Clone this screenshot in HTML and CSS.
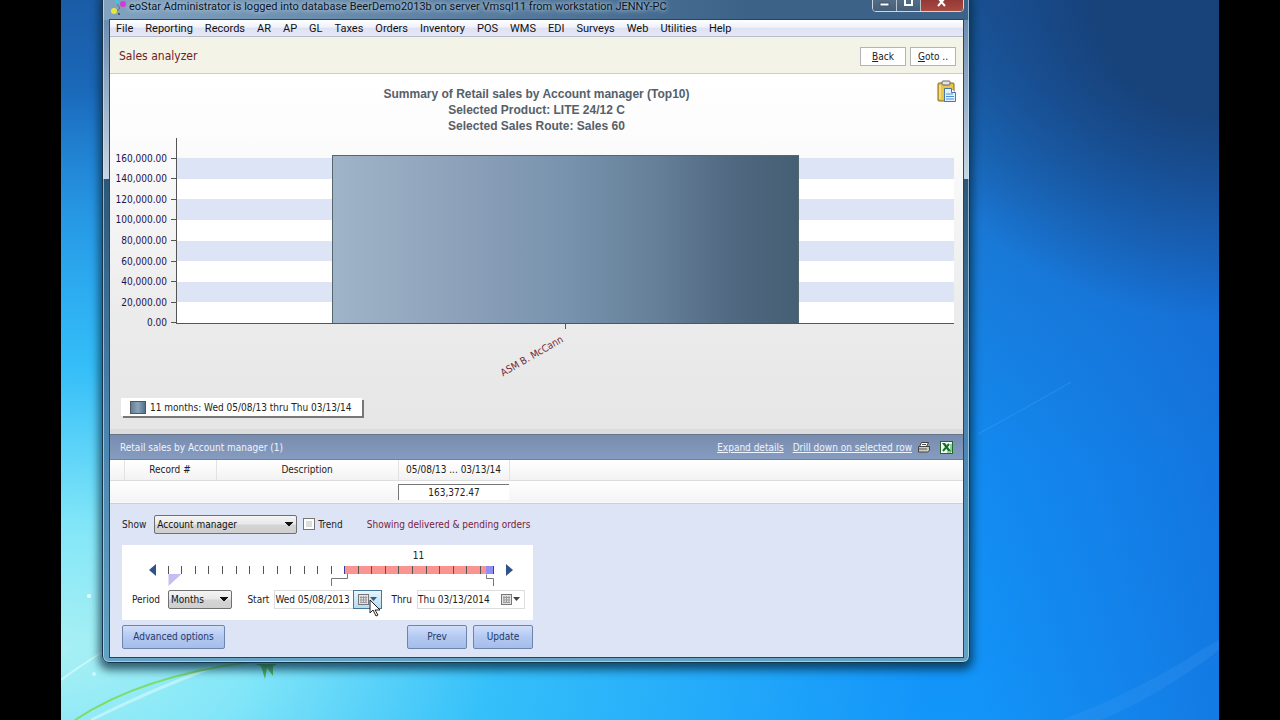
FILE: index.html
```html
<!DOCTYPE html>
<html lang="en">
<head>
  <meta charset="utf-8">
  <title>Sales analyzer</title>
  <link rel="stylesheet" href="styles.css">
</head>
<body>
  <div class="desktop">
    <svg class="wallpaper" viewBox="0 0 1158 720" preserveAspectRatio="none" aria-hidden="true">
      <path d="M0 680 Q20 665 48 648" stroke="#e4fdfd" stroke-opacity=".6" stroke-width="2" fill="none"/>
      <path d="M30 720 Q90 690 150 668" stroke="#e4fdfd" stroke-opacity=".5" stroke-width="3" fill="none"/>
      <path d="M14 720 Q80 676 190 662" stroke="#7ddc6c" stroke-width="2" fill="none"/>
      <path d="M194 664 l6 2 l4 13 l2 -11 l6 8 l0 -10 l4 -2 z" fill="#4fae62"/>
      <path d="M917 434 Q970 405 1010 382" stroke="#5cb0f8" stroke-opacity=".3" stroke-width="1" fill="none"/>
      <path d="M1000 720 Q1080 690 1140 650 L1158 640 V650 Q1100 695 1040 720z" fill="#4da0f4" fill-opacity=".2"/>
      <circle cx="28" cy="596" r="2" fill="#e8ffff"/>
      <circle cx="33" cy="674" r="2" fill="#c8f8ff"/>
    </svg>

    <div class="window">
      <div class="titlebar">
        <svg class="app-icon" width="20" height="20" viewBox="0 0 20 20" aria-hidden="true">
          <circle cx="8" cy="6" r="2" fill="#38c8e8"/>
          <circle cx="14" cy="8" r="3" fill="#d838d8"/>
          <circle cx="5" cy="15" r="3" fill="#e8e83c"/>
          <circle cx="10" cy="18" r="1" fill="#446"/>
          <path d="M8 8l3 4l-3 3" stroke="#5d7b5c" fill="none"/>
        </svg>
        <span class="title">eoStar Administrator is logged into database BeerDemo2013b on server Vmsql11 from workstation JENNY-PC</span>
        <div class="window-buttons">
          <button class="win-btn" aria-label="Minimize"><svg width="11" height="10"><rect x="1" y="5" width="9" height="3" fill="#fff" stroke="#456"/></svg></button>
          <button class="win-btn" aria-label="Maximize"><svg width="11" height="10"><rect x="2" y="1" width="7" height="6" fill="none" stroke="#fff" stroke-width="2"/></svg></button>
          <button class="win-btn close" aria-label="Close"><svg width="12" height="10"><path d="M2 0l7 8M9 0l-7 8" stroke="#fff" stroke-width="2"/></svg></button>
        </div>
      </div>

      <div class="client">
        <nav class="menubar">
          <a href="#">File</a>
          <a href="#">Reporting</a>
          <a href="#">Records</a>
          <a href="#">AR</a>
          <a href="#">AP</a>
          <a href="#">GL</a>
          <a href="#">Taxes</a>
          <a href="#">Orders</a>
          <a href="#">Inventory</a>
          <a href="#">POS</a>
          <a href="#">WMS</a>
          <a href="#">EDI</a>
          <a href="#">Surveys</a>
          <a href="#">Web</a>
          <a href="#">Utilities</a>
          <a href="#">Help</a>
        </nav>

        <header class="page-header">
          <h1>Sales analyzer</h1>
          <button class="nav-btn"><u>B</u>ack</button>
          <button class="nav-btn"><u>G</u>oto ..</button>
        </header>

        <section class="chart">
          <button class="clipboard" aria-label="Copy to clipboard">
            <svg width="20" height="23" viewBox="0 0 20 23">
              <rect x="1" y="3" width="16" height="18" rx="1" fill="#e8c64a" stroke="#80661c"/>
              <path d="M3 5v14" stroke="#fff2a8"/>
              <rect x="5" y="1" width="8" height="4" rx="1" fill="#e4e4e0" stroke="#666"/>
              <path d="M7.500 8.500h7l4 4v9h-11z" fill="#e4f2ff" stroke="#4876a8"/>
              <path d="M14.500 8.500v4h4" fill="#fff" stroke="#4876a8"/>
              <path d="M9 14h7M9 16.500h8M9 19h8" stroke="#4a90d8"/>
            </svg>
          </button>
          <h2>Summary of Retail sales by Account manager (Top10)<br>Selected Product: LITE 24/12 C<br>Selected Sales Route: Sales 60</h2>
          <div class="plot">
            <div class="y-axis">
              <span>160,000.00</span>
              <span>140,000.00</span>
              <span>120,000.00</span>
              <span>100,000.00</span>
              <span>80,000.00</span>
              <span>60,000.00</span>
              <span>40,000.00</span>
              <span>20,000.00</span>
              <span>0.00</span>
            </div>
            <div class="plot-area">
              <div class="bands">
                <i></i><i></i><i></i><i></i><i></i><i></i><i></i><i></i>
              </div>
              <div class="bar"></div>
            </div>
          </div>
          <div class="x-axis"><span>ASM B. McCann</span></div>
          <div class="legend"><i class="swatch"></i>11 months: Wed 05/08/13 thru Thu 03/13/14</div>
        </section>

        <section class="results">
          <div class="results-bar">
            <h3>Retail sales by Account manager (1)</h3>
            <a href="#">Expand details</a>
            <a href="#">Drill down on selected row</a>
            <button class="icon-btn" aria-label="Print">
              <svg width="14" height="12" viewBox="0 0 14 12">
                <path d="M4.500 1.500h7l-2 4h-7z" fill="#fff" stroke="#444"/>
                <path d="M1.500 5.500h11v4l-2 1.500h-9z" fill="#d2cebe" stroke="#444"/>
                <path d="M2 8h8M5 3.500h4" stroke="#555"/>
              </svg>
            </button>
            <button class="icon-btn" aria-label="Export to Excel">
              <svg width="13" height="13" viewBox="0 0 13 13">
                <rect x=".5" y=".5" width="12" height="12" fill="#f4fff4" stroke="#1d6b2a"/>
                <path d="M2 2h3l6 8h-3z" fill="#14702a"/>
                <path d="M9 3L3 10" stroke="#14702a" stroke-width="2"/>
                <path d="M11 3v8h-4" stroke="#30a048" fill="none"/>
              </svg>
            </button>
          </div>
          <table>
            <thead>
              <tr>
                <th class="col-mark"></th>
                <th class="col-record">Record #</th>
                <th class="col-desc">Description</th>
                <th class="col-value">05/08/13 ... 03/13/14</th>
                <th></th>
              </tr>
            </thead>
            <tbody>
              <tr>
                <td></td>
                <td></td>
                <td></td>
                <td><div class="total">163,372.47</div></td>
                <td></td>
              </tr>
            </tbody>
          </table>
        </section>

        <form class="options">
          <div class="row show-row">
            <label for="show">Show</label>
            <select id="show" class="show-select"><option>Account manager</option></select>
            <input type="checkbox" id="trend">
            <label for="trend">Trend</label>
            <span class="status">Showing delivered &amp; pending orders</span>
          </div>

          <div class="period-panel">
            <div class="slider-count">11</div>
            <div class="slider">
              <button type="button" class="arrow" aria-label="Earlier"><svg width="7" height="12"><path d="M7 0v12L0 6z" fill="#2f5288"/></svg></button>
              <svg class="track" width="328" height="24" viewBox="0 0 328 24">
                <rect x="177" y="4" width="142" height="8" fill="#f99490"/>
                <rect x="319" y="4" width="7" height="8" fill="#9090f4"/>
                <path d="M1.500 12h13l-13 12z" fill="#c6bdf0"/>
                <path d="M1.500 4v8M14.500 4v8M28.500 4v8M41.500 4v8M55.500 4v8M69.500 4v8M82.500 4v8M96.500 4v8M110.500 4v8M123.500 4v8M137.500 4v8M150.500 4v8M164.500 4v8M191.500 4v8M204.500 4v8M218.500 4v8M231.500 4v8M245.500 4v8M259.500 4v8M272.500 4v8M286.500 4v8M299.500 4v8M313.500 4v8" stroke="#555"/>
                <path d="M177.500 4v8M326.500 4v8" stroke="#33409c"/>
                <path d="M164.500 24v-7.500h16v-5M326.500 24v-7.500h-7v-4" stroke="#777" fill="none"/>
              </svg>
              <button type="button" class="arrow" aria-label="Later"><svg width="7" height="12"><path d="M0 0v12l7 -6z" fill="#2f5288"/></svg></button>
            </div>
            <div class="row period-row">
              <label for="period">Period</label>
              <select id="period" class="period-select"><option>Months</option></select>
              <label for="start">Start</label>
              <div class="date">
                <input type="text" id="start" value="Wed 05/08/2013">
                <button type="button" class="date-btn active" aria-label="Pick start date">
                  <svg width="19" height="13" viewBox="0 0 19 13">
                    <rect x=".5" y="1.500" width="10" height="10" fill="#e4e4e4" stroke="#777"/>
                    <path d="M3 3v7M5.500 3v7M8 3v7M2 4.500h7M2 7h7M2 9.500h7" stroke="#999"/>
                    <path d="M12 4h7l-3.500 4z" fill="#35617c"/>
                  </svg>
                  <svg class="pointer" width="13" height="19" viewBox="0 0 13 19">
                    <path d="M1 1v13l3 -3l3 6l2 -1l-3 -5h5z" fill="#fff" stroke="#222"/>
                  </svg>
                </button>
              </div>
              <label for="thru">Thru</label>
              <div class="date">
                <input type="text" id="thru" value="Thu 03/13/2014">
                <button type="button" class="date-btn" aria-label="Pick end date">
                  <svg width="19" height="13" viewBox="0 0 19 13">
                    <rect x=".5" y="1.500" width="10" height="10" fill="#e4e4e4" stroke="#777"/>
                    <path d="M3 3v7M5.500 3v7M8 3v7M2 4.500h7M2 7h7M2 9.500h7" stroke="#999"/>
                    <path d="M12 4h7l-3.500 4z" fill="#444"/>
                  </svg>
                </button>
              </div>
            </div>
          </div>

          <div class="row actions">
            <button type="button" class="action wide">Advanced options</button>
            <button type="button" class="action">Prev</button>
            <button type="button" class="action">Update</button>
          </div>
        </form>
      </div>
    </div>
  </div>
</body>
</html>
```
FILE: styles.css
```css
* {
  box-sizing: border-box;
}

body {
  margin: 0;
  background: #000;
  font-family: "DejaVu Sans Condensed", "DejaVu Sans", Tahoma, sans-serif;
  font-size: 10px;
  color: #222;
}

button,
input,
select {
  font: inherit;
  color: inherit;
  margin: 0;
  padding: 0;
}

h1, h2, h3 {
  margin: 0;
  font-weight: normal;
}

.desktop {
  position: relative;
  min-height: 100vh;
  margin: 0 61px;
  overflow: hidden;
  background:
    radial-gradient(ellipse 30% 44% at 100% 0%, #17427a 0%, #17427a 35%, rgba(23, 66, 122, 0) 100%),
    linear-gradient(90deg, rgba(20, 90, 200, 0) 78%, rgba(20, 90, 200, 0.45) 100%),
    radial-gradient(ellipse 75% 78% at 0% 90%, #a8f0f4 0%, #82e6f8 22%, rgba(56, 196, 250, 0.9) 50%, rgba(16, 150, 250, 0) 100%),
    linear-gradient(#1b5ca6 0%, #1a78d4 30%, #128cf2 65%, #1296fa 100%);
}

.wallpaper {
  position: absolute;
  inset: 0;
  width: 100%;
  height: 100%;
}

/* window frame */
.window {
  position: absolute;
  top: -8px;
  left: 41px;
  right: 249px;
  padding: 0 5px 4px 6px;
  border: 1px solid #17344c;
  border-radius: 7px;
  background:
    linear-gradient(90deg, rgba(160, 190, 215, 0.7), rgba(60, 100, 140, 0) 75%) 0 0 / 100% 27px no-repeat,
    linear-gradient(#3c6288 0 27px, #6c8cb0 27px, #c8d6e4 186px, #2d5878 186px, #4882ae 420px, #62a4c4 100%);
  box-shadow: inset 0 0 0 1px rgba(210, 235, 250, 0.6), 0 4px 8px 3px rgba(5, 40, 60, 0.7);
}

.titlebar {
  display: flex;
  align-items: center;
  height: 26px;
  font: 11px "Roboto", "Segoe UI", sans-serif;
  color: #0c1622;
}

.title {
  flex: 1;
  white-space: nowrap;
  text-shadow: 0 0 5px #b8cee2, 0 0 5px #b8cee2;
}

.window-buttons {
  display: flex;
  align-self: flex-start;
  border: 1px solid #ccd6e0;
  border-radius: 0 0 4px 4px;
  overflow: hidden;
}

.win-btn {
  display: flex;
  align-items: flex-end;
  justify-content: center;
  width: 24px;
  height: 17px;
  padding-bottom: 3px;
  border: 0;
  border-right: 1px solid #b8c4d0;
  background: linear-gradient(#5a7590, #465f78);
}

.win-btn.close {
  width: 42px;
  border-right: 0;
  background: linear-gradient(#8c3030, #a84a40);
}

.client {
  border: 1px solid #24445f;
  background: #dce4f6;
}

/* menu and header */
.menubar {
  display: flex;
  gap: 12px;
  height: 17px;
  padding-left: 6px;
  border-bottom: 1px solid #b8bcc8;
  background: linear-gradient(#fff, #f0f1fa 45%, #dfe2f2 50%, #e6e8f6);
  font: 11px/18px "Roboto", "Segoe UI", sans-serif;
}

.menubar a {
  color: #111;
  text-decoration: none;
}

.page-header {
  display: flex;
  align-items: center;
  gap: 4px;
  height: 37px;
  padding: 2px 7px 0 9px;
  border-bottom: 1px solid #ccc;
  background: #f4f3e8;
}

.page-header h1 {
  flex: 1;
  font-size: 12px;
  color: #6e2224;
}

.nav-btn {
  width: 46px;
  height: 19px;
  border: 1px solid #b4b4b4;
  background: #fff;
}

/* chart */
.chart {
  position: relative;
  height: 360px;
  padding: 12px 9px 0 0;
  border-bottom: 5px solid #dcdcdc;
  background: linear-gradient(#fff, #fcfcfc 18%, #ececec 65%, #e6e6e6);
}

.clipboard {
  position: absolute;
  top: 6px;
  right: 6px;
  border: 0;
  background: none;
}

.chart h2 {
  padding-left: 9px;
  font: bold 12px/16px "Liberation Sans", Arial, sans-serif;
  text-align: center;
  color: #566068;
}

.plot {
  display: flex;
  align-items: flex-start;
  margin-top: 4px;
}

.y-axis {
  display: flex;
  flex-direction: column;
  width: 66px;
  height: 195px;
  padding-top: 10px;
  color: #1c1450;
}

.y-axis span {
  display: flex;
  flex: 1;
  align-items: center;
  justify-content: flex-end;
}

.y-axis span::after {
  content: "";
  width: 5px;
  height: 1px;
  margin-left: 4px;
  background: #555;
}

.plot-area {
  flex: 1;
  display: grid;
  height: 186px;
  border-left: 1px solid #555;
  border-bottom: 1px solid #555;
}

.bands,
.bar {
  grid-area: 1 / 1;
}

.bands {
  display: flex;
  flex-direction: column;
  margin-top: 20px;
}

.bands i {
  flex: 1;
  background: #fff;
}

.bands i:nth-child(odd) {
  background: #dce4f5;
}

.bar {
  width: 60%;
  margin: 17px auto 0;
  border: 1px solid #56666f;
  border-bottom: 0;
  background: linear-gradient(90deg, #a0b4c8, #8b9fb8 30%, #7893ae 50%, #657f98 70%, #506880 86%, #455f74);
}

.x-axis {
  height: 65px;
  margin: -9px 0 0 66px;
}

.x-axis::before {
  content: "";
  display: block;
  width: 1px;
  height: 5px;
  margin: 0 auto;
  background: #555;
}

.x-axis span {
  display: block;
  width: 50%;
  margin-top: 3px;
  text-align: right;
  color: #6c2836;
  transform: rotate(-30deg);
  transform-origin: right bottom;
}

.legend {
  display: inline-flex;
  align-items: center;
  gap: 4px;
  height: 18px;
  margin: 9px 0 0 11px;
  padding: 0 11px 0 9px;
  background: #fff;
  box-shadow: 2px 2px 0 #777;
}

.swatch {
  width: 16px;
  height: 13px;
  border: 1px solid #555;
  background: linear-gradient(90deg, #62809a, #8aa4ba, #54708a);
}

/* results */
.results-bar {
  display: flex;
  align-items: center;
  gap: 9px;
  height: 26px;
  padding: 0 10px;
  border-top: 1px solid #66758c;
  border-bottom: 1px solid #7080a0;
  background: linear-gradient(#788cae, #869cc0);
  color: #eef4ff;
}

.results-bar h3 {
  flex: 1;
  font-size: 10px;
}

.results-bar a {
  color: #eef4ff;
}

.icon-btn {
  display: flex;
  border: 0;
  background: none;
}

.results-bar a + .icon-btn {
  margin-left: -4px;
}

.results table {
  width: 100%;
  table-layout: fixed;
  border-collapse: collapse;
}

.results th,
.results td {
  padding: 0;
  font-weight: normal;
  text-align: center;
}

.results th {
  height: 20px;
  border-right: 1px solid #e2e2e2;
  border-bottom: 1px solid #ddd;
  background: linear-gradient(#fff, #f2f2f2);
}

.results td {
  height: 23px;
  border-bottom: 1px solid #ccd0d8;
  background: linear-gradient(#fff, #f4f4f6);
}

.results th:last-child {
  border-right: 0;
}

.col-mark {
  width: 14px;
}

.col-record {
  width: 92px;
}

.col-desc {
  width: 182px;
}

.col-value {
  width: 111px;
}

.total {
  height: 16px;
  border-top: 1px solid #777;
  border-left: 1px solid #777;
  background: #fff;
  line-height: 15px;
}

/* options */
.options {
  padding: 11px 12px 8px;
}

.row {
  display: flex;
  align-items: center;
}

select {
  appearance: none;
  height: 19px;
  padding-left: 2px;
  border: 1px solid #707070;
  border-radius: 2px;
  background:
    conic-gradient(from -45deg at 50% 100%, #111 90deg, transparent 0) right 3px center / 8px 4px no-repeat,
    linear-gradient(#f4f4f4, #e8e8e8 48%, #d4d4d4 52%, #cfcfcf);
  color: #111;
}

.show-select {
  width: 143px;
  margin: 0 6px 0 8px;
}

.show-row input {
  appearance: none;
  width: 12px;
  height: 12px;
  margin-right: 3px;
  border: 1px solid #777;
  background: #ddd;
  box-shadow: inset 0 0 0 2px #fff;
}

.status {
  margin-left: 24px;
  color: #7a1c40;
}

.period-panel {
  width: 411px;
  height: 75px;
  margin-top: 11px;
  padding: 5px 8px 0 10px;
  background: #fff;
}

.slider-count {
  padding-left: 180px;
  line-height: 12px;
  text-align: center;
}

.slider {
  display: flex;
  justify-content: center;
  gap: 11px;
  height: 28px;
  padding-left: 5px;
}

.slider .track {
  display: block;
}

.arrow {
  align-self: flex-start;
  height: 12px;
  margin-top: 2px;
  border: 0;
  background: none;
}

.arrow svg {
  display: block;
}

.period-select {
  width: 66px;
  margin: 0 15px 0 8px;
}

.date {
  display: flex;
  width: 108px;
  height: 19px;
  margin: 0 9px 0 5px;
  border: 1px solid #ddd;
}

.date:last-child {
  margin-right: 0;
}

.date input {
  flex: 1;
  min-width: 0;
  border: 0;
  background: none;
}

.date-btn {
  position: relative;
  display: flex;
  align-items: center;
  justify-content: center;
  width: 29px;
  margin: -1px;
  border: 0;
  background: none;
}

.date-btn.active {
  border: 1px solid #47789c;
  background: linear-gradient(#e8f5fd, #b4dcf2);
}

.pointer {
  position: absolute;
  top: 8px;
  left: 15px;
}

.actions {
  gap: 6px;
  width: 411px;
  margin-top: 5px;
}

.action {
  width: 60px;
  height: 24px;
  border: 1px solid #6d84ad;
  border-radius: 2px;
  background: linear-gradient(#d0defa, #b4c9f0 50%, #a4bdea);
  color: #26396c;
}

.action.wide {
  width: 103px;
  margin-right: auto;
}
```
